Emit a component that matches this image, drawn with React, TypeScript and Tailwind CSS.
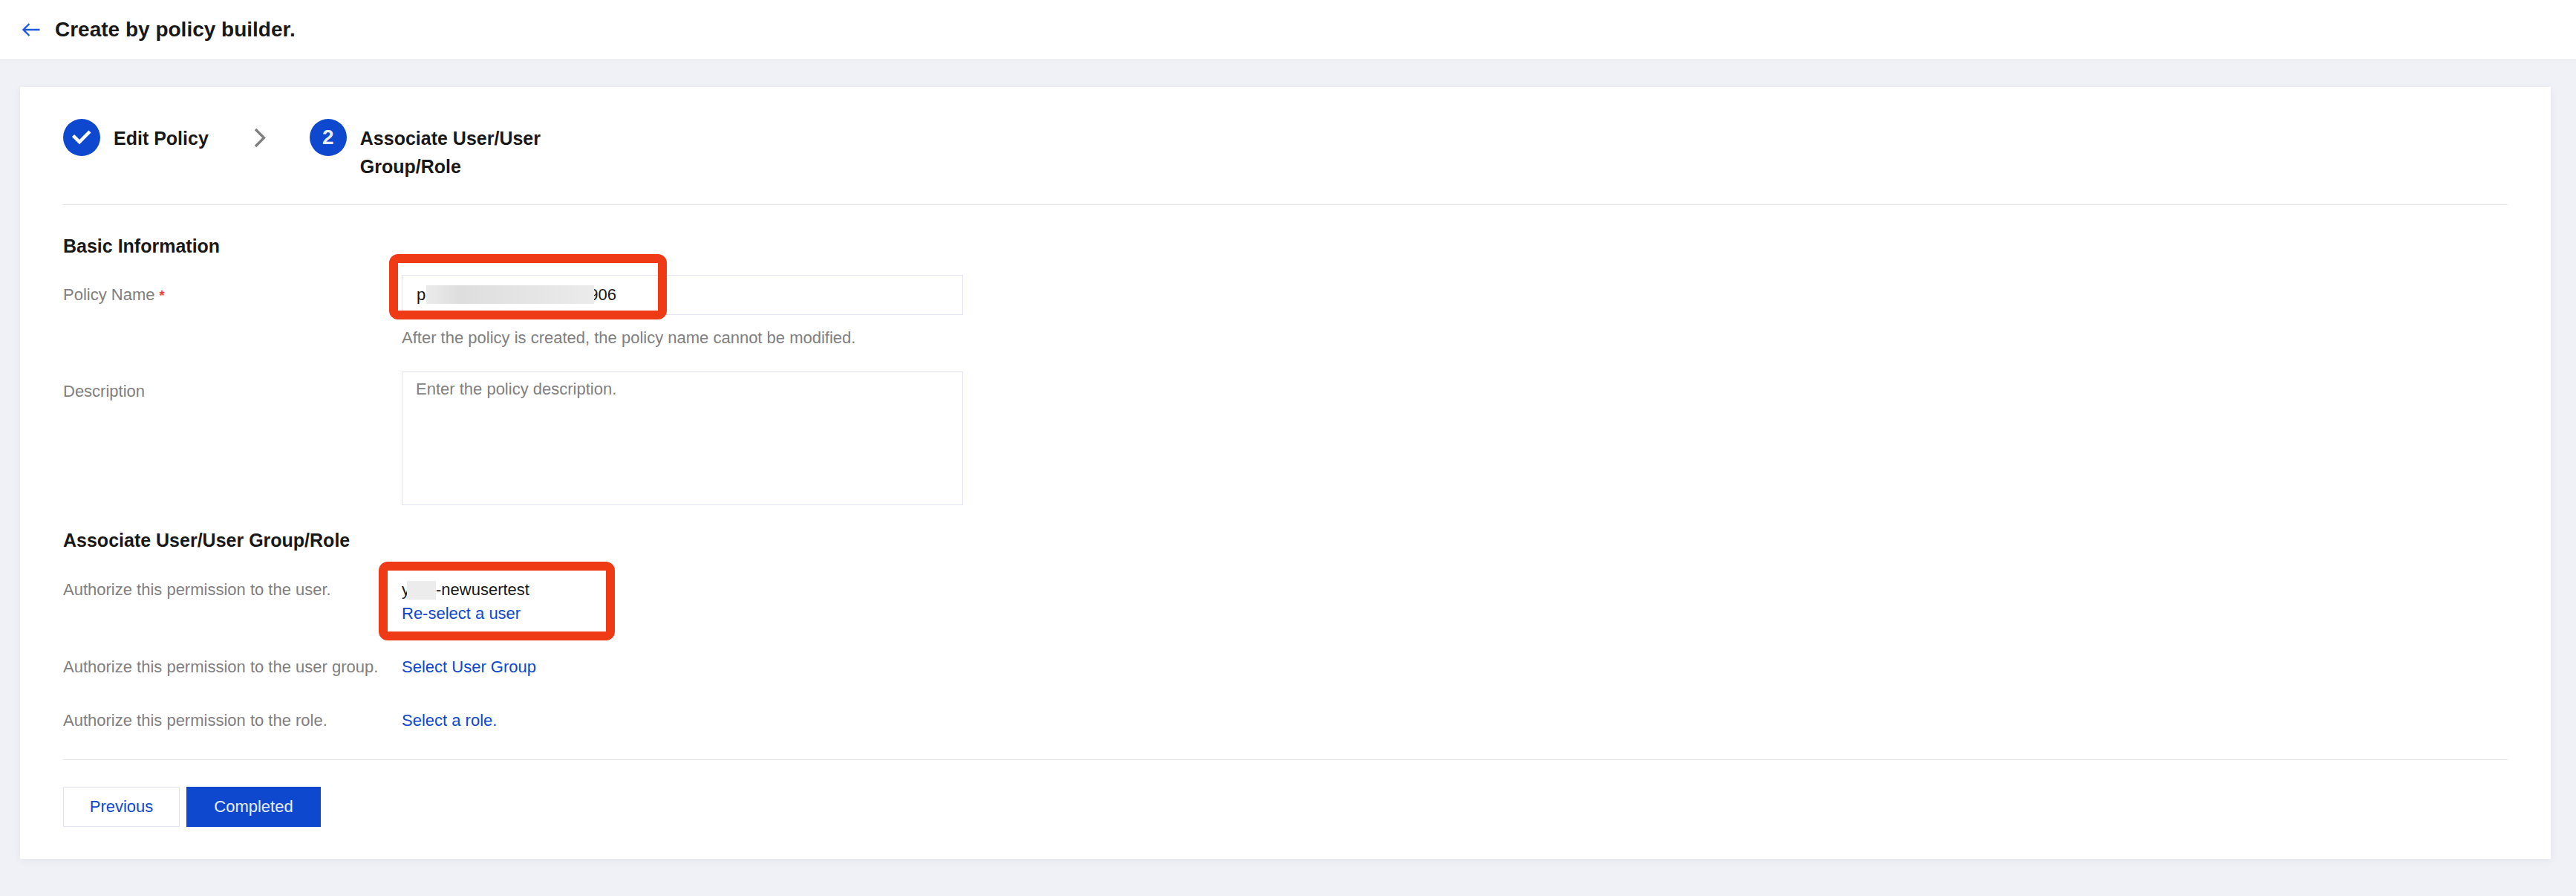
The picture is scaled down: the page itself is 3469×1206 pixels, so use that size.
import React, { useState } from "react";

const authorizations = [
  { label: "Authorize this permission to the user group.", action: "Select User Group" },
  { label: "Authorize this permission to the role.", action: "Select a role." },
];

const App: React.FC = () => {
  const [policyName, setPolicyName] = useState("p" + " ".repeat(36) + "906");
  const [description, setDescription] = useState("");

  const handleSubmit = (event: React.FormEvent) => {
    event.preventDefault();
  };

  return (
    <div className="min-h-screen bg-[#eff1f7] font-['Liberation_Sans',sans-serif] text-[22px] leading-8 text-[#181818]">
      <header className="flex h-[81px] items-center border-b border-[#e3e4e9] bg-white px-[30px]">
        <a href="#back" aria-label="Back">
          <svg width="24" height="18" viewBox="0 0 24 18" fill="none" stroke="#2058da" strokeWidth="2.3">
            <path d="M9.5 1 L1.5 9 L9.5 17 M1.5 9 H23.5" />
          </svg>
        </a>
        <h1 className="ml-5 text-[28px] font-bold">Create by policy builder.</h1>
      </header>

      <main className="mt-9 mr-[34px] ml-[27px] bg-white px-[58px] py-[43px] shadow-[0_2px_10px_rgba(0,0,0,0.06)]">
        <ol className="flex items-start border-b border-[#e5e5e5] pb-8 text-[25px] leading-[38px] font-bold">
          <li className="flex">
            <span className="flex size-[50px] items-center justify-center rounded-full bg-[#0d48cf]">
              <svg width="26" height="20" viewBox="0 0 26 20" fill="none" stroke="#fff" strokeWidth="4.5">
                <path d="M1.5 7.5 L10 16 L24 2" />
              </svg>
            </span>
            <span className="mt-[7px] ml-[18px]">Edit Policy</span>
          </li>
          <li className="mt-3 mr-[59px] ml-[61px]" aria-hidden="true">
            <svg width="16" height="27" viewBox="0 0 16 27" fill="none" stroke="#808080" strokeWidth="3.4">
              <path d="M2 2 L13.5 13.5 L2 25" />
            </svg>
          </li>
          <li className="flex">
            <span className="flex size-[50px] items-center justify-center rounded-full bg-[#0d48cf] text-[28px] text-[#e7edfa]">
              2
            </span>
            <span className="mt-[7px] ml-[18px] w-[260px]">Associate User/User Group/Role</span>
          </li>
        </ol>

        <form onSubmit={handleSubmit}>
          <h2 className="mt-9 text-[25px] leading-[38px] font-bold">Basic Information</h2>
          <div className="mt-5 flex">
            <label htmlFor="policyName" className="w-[456px] shrink-0 leading-[54px] text-[#808080]">
              Policy Name <span className="text-lg font-bold text-[#ee4033]">*</span>
            </label>
            <div className="relative w-full max-w-[756px]">
              <input
                id="policyName"
                type="text"
                value={policyName}
                onChange={(e) => setPolicyName(e.target.value)}
                className="block h-[54px] w-full border border-[#e1e4ee] px-[19px] outline-none"
              />
              {/* mask over the middle of the name */}
              <span className="pointer-events-none absolute top-[14px] left-[33px] h-[25px] w-[226px] bg-linear-to-r from-[#ebebeb] via-[#dedede] via-20% to-[#ebebeb]" />
              <span className="pointer-events-none absolute top-[-28px] left-[-17px] h-[88px] w-[374px] rounded-xl border-12 border-[#ef3a16]" />
              <p className="mt-[15px] text-[#808080]">
                After the policy is created, the policy name cannot be modified.
              </p>
            </div>
          </div>
          <div className="mt-[29px] flex">
            <label htmlFor="description" className="w-[456px] shrink-0 leading-[54px] text-[#808080]">
              Description
            </label>
            <textarea
              id="description"
              value={description}
              onChange={(e) => setDescription(e.target.value)}
              placeholder="Enter the policy description."
              className="block h-[180px] w-full max-w-[756px] resize-none border border-[#e1e4ee] px-[18px] py-[7px] outline-none placeholder:text-[#808080]"
            />
          </div>

          <h2 className="mt-7 text-[25px] leading-[38px] font-bold">Associate User/User Group/Role</h2>
          <div className="mt-8 flex">
            <span className="w-[456px] shrink-0 text-[#808080]">Authorize this permission to the user.</span>
            <div className="relative">
              <p className="flex items-center">
                y
                <span className="-ml-1 h-[25px] w-[39px] bg-[#ececec]" />
                -newusertest
              </p>
              <a href="#user" className="block text-[#0d48cf]">
                Re-select a user
              </a>
              <span className="pointer-events-none absolute top-[-22px] left-[-31px] h-[106px] w-[318px] rounded-xl border-12 border-[#ef3a16]" />
            </div>
          </div>
          {authorizations.map((item) => (
            <div key={item.action} className="mt-10 flex">
              <span className="w-[456px] shrink-0 text-[#808080]">{item.label}</span>
              <a href="#select" className="text-[#0d48cf]">
                {item.action}
              </a>
            </div>
          ))}

          <div className="mt-9 flex gap-[9px] border-t border-[#e3e5ec] pt-9">
            <button type="button" className="h-[54px] w-[157px] border border-[#e1e4ee] text-[#0d48cf]">
              Previous
            </button>
            <button type="submit" className="h-[54px] w-[181px] bg-[#0d48cf] text-[#e7edfa]">
              Completed
            </button>
          </div>
        </form>
      </main>
    </div>
  );
};

export default App;
